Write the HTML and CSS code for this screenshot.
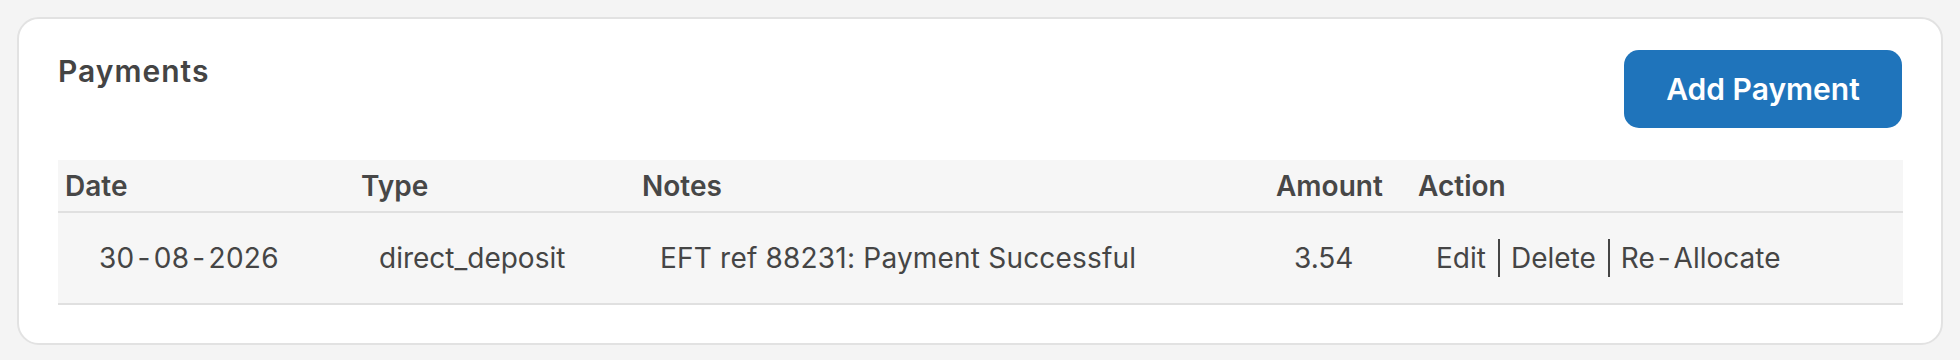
FILE: index.html
```html
<!DOCTYPE html>
<html>
<head>
<meta charset="utf-8">
<link rel="stylesheet" href="styles.css">
</head>
<body>
<div class="card">
  <div class="card-head">
    <h2 class="title">Payments</h2>
    <button class="btn">Add Payment</button>
  </div>
  <table class="tbl">
    <colgroup>
      <col class="c-date"><col class="c-type"><col class="c-notes"><col class="c-amt"><col class="c-act">
    </colgroup>
    <thead>
      <tr><th>Date</th><th>Type</th><th>Notes</th><th>Amount</th><th>Action</th></tr>
    </thead>
    <tbody>
      <tr>
        <td class="d-date">30<span class="hy">-</span>08<span class="hy">-</span>2026</td>
        <td>direct_deposit</td>
        <td class="d-notes">EFT ref 88231: Payment Successful</td>
        <td>3.54</td>
        <td class="d-act">Edit<span class="sep"></span>Delete<span class="sep"></span>Re<span class="hy">-</span>Allocate</td>
      </tr>
    </tbody>
  </table>
</div>
</body>
</html>
```
FILE: styles.css
```css
html, body { margin: 0; padding: 0; }
body {
  background: #f4f4f4;
  font-family: Inter, "Liberation Sans", sans-serif;
  color: #454545;
  padding: 17px;
  width: 1926px;
  box-sizing: content-box;
}
.card {
  background: #fff;
  border: 2px solid #e2e2e2;
  border-radius: 22px;
  padding: 31px 39px 38px 39px;
  height: 328px;
  box-sizing: border-box;
}
.card-head {
  display: flex;
  justify-content: space-between;
  align-items: flex-start;
  height: 78px;
  margin-bottom: 32px;
}
.title {
  margin: 0;
  padding-top: 3px;
  font-family: Inter, sans-serif;
  font-size: 30px;
  font-weight: 600;
  letter-spacing: 1px;
  color: #444;
  line-height: 36px;
}
.btn {
  width: 278px;
  height: 78px;
  background: #1f74bb;
  color: #fff;
  border: none;
  border-radius: 15px;
  font-family: Inter, sans-serif;
  font-size: 30px;
  font-weight: 600;
  padding: 0;
}
.tbl {
  width: 1845px;
  border-collapse: collapse;
  table-layout: fixed;
  background: #f6f6f6;
}
.c-date { width: 296px; }
.c-type { width: 281px; }
.c-notes { width: 634px; }
.c-amt { width: 142px; }
.c-act { width: 492px; }
.tbl th {
  text-align: left;
  font-weight: 600;
  font-size: 28px;
  color: #474747;
  height: 52px;
  padding: 0 0 0 7px;
  border-bottom: 2px solid #e0e0e0;
  box-sizing: border-box;
  vertical-align: middle;
}
.tbl td {
  font-size: 28px;
  font-weight: 400;
  color: #454545;
  height: 90px;
  padding: 0 0 0 25px;
  border-bottom: 2px solid #e0e0e0;
  vertical-align: middle;
  white-space: nowrap;
}
.tbl td.d-date { padding-left: 41px; letter-spacing: 0.3px; }
.tbl td.d-notes { letter-spacing: 0.2px; }
.hy { margin: 0 3px; }
.sep {
  display: inline-block;
  width: 2px;
  height: 38px;
  background: #454545;
  vertical-align: -9px;
  margin: 0 11px 0 12px;
}
```
